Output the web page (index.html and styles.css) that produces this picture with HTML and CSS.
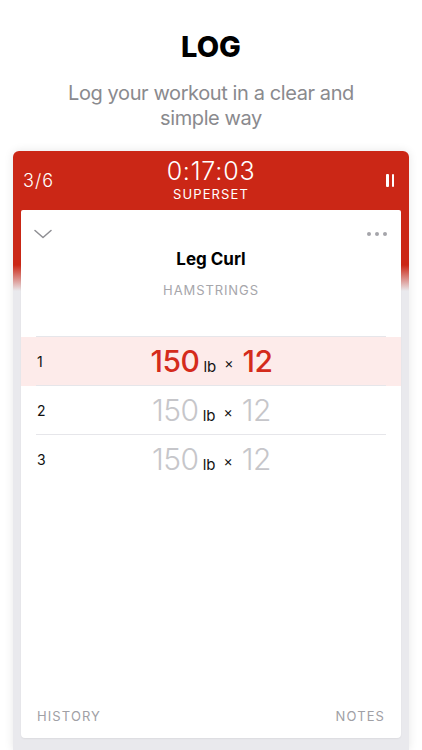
FILE: index.html
```html
<!DOCTYPE html>
<html lang="en">
<head>
    <meta charset="UTF-8">
    <meta name="viewport" content="width=device-width, initial-scale=1.0">
    <title>Log</title>
    <link rel="stylesheet" href="styles.css">
</head>
<body>
    <div class="intro">
        <h1>LOG</h1>
        <p>Log your workout in a clear and simple way</p>
    </div>

    <div class="phone">
        <div class="topbar">
            <span class="progress">3/6</span>
            <div class="timer">
                <span class="time">0:17:03</span>
                <span class="mode">SUPERSET</span>
            </div>
            <span class="pause"><i></i><i></i></span>
        </div>

        <div class="card">
            <div class="card-tools">
                <svg class="chevron" width="18" height="10" viewBox="0 0 18 10">
                    <path d="M1 1.5 L9 8.5 L17 1.5" fill="none" stroke="#8e8e93" stroke-width="1.5" stroke-linecap="round" stroke-linejoin="round"/>
                </svg>
                <span class="dots"><i></i><i></i><i></i></span>
            </div>
            <h2 class="exercise">Leg Curl</h2>
            <p class="muscle">HAMSTRINGS</p>

            <div class="sets">
                <div class="set active">
                    <div class="set-inner">
                        <span class="set-num">1</span>
                        <span class="set-value"><b>150</b><small>lb</small><em>×</em><b>12</b></span>
                    </div>
                </div>
                <div class="set">
                    <div class="set-inner">
                        <span class="set-num">2</span>
                        <span class="set-value"><b>150</b><small>lb</small><em>×</em><b>12</b></span>
                    </div>
                </div>
                <div class="set">
                    <div class="set-inner">
                        <span class="set-num">3</span>
                        <span class="set-value"><b>150</b><small>lb</small><em>×</em><b>12</b></span>
                    </div>
                </div>
            </div>

            <div class="card-footer">
                <span>HISTORY</span>
                <span>NOTES</span>
            </div>
        </div>
    </div>
</body>
</html>
```

FILE: styles.css
```css
body {
    font-family: Inter, "Liberation Sans", Arial, sans-serif;
    margin: 0;
    padding: 0;
    background-color: #fff;
    height: 100vh;
    display: flex;
    flex-direction: column;
    overflow: hidden;
}
.intro {
    text-align: center;
    padding-top: 30px;
}
.intro h1 {
    margin: 0;
    font-size: 29px;
    font-weight: 800;
    line-height: 34px;
    color: #000;
}
.intro p {
    margin: 17px auto 0;
    width: 300px;
    font-size: 20px;
    line-height: 25px;
    letter-spacing: -0.4px;
    color: #8a8a8e;
}
.phone {
    flex: 1;
    margin: 20px 13px 0;
    padding: 0 8px 12px;
    display: flex;
    flex-direction: column;
    border-radius: 6px 6px 0 0;
    background: linear-gradient(#cb2716 0, #cb2716 114px, #e9e9ed 140px);
    box-shadow: 0 0 10px rgba(0, 0, 0, 0.1);
}
.topbar {
    height: 59px;
    display: grid;
    grid-template-columns: 1fr auto 1fr;
    align-items: center;
    color: #fff;
    padding: 0 2px;
}
.progress {
    font-size: 18px;
    font-weight: 300;
    letter-spacing: 1px;
}
.timer {
    display: flex;
    flex-direction: column;
    align-items: center;
    margin-top: -2px;
}
.time {
    font-size: 25px;
    font-weight: 300;
    line-height: 28px;
    letter-spacing: 0.8px;
}
.mode {
    font-size: 13px;
    font-weight: 400;
    line-height: 18px;
    letter-spacing: 1.1px;
}
.pause {
    justify-self: end;
    display: flex;
    gap: 3px;
    margin-right: 5px;
}
.pause i {
    width: 2.5px;
    height: 13px;
    background: #fff;
    border-radius: 1px;
}
.card {
    flex: 1;
    background: #fff;
    border-radius: 2px 2px 4px 4px;
    display: flex;
    flex-direction: column;
    box-shadow: 0 1px 2px rgba(0, 0, 0, 0.06);
}
.card-tools {
    display: flex;
    justify-content: space-between;
    align-items: center;
    padding: 18px 14px 0 13px;
    height: 12px;
}
.dots {
    display: flex;
    gap: 4px;
}
.dots i {
    width: 4px;
    height: 4px;
    border-radius: 50%;
    background: #a5a5aa;
}
.exercise {
    margin: 8px 0 0;
    text-align: center;
    font-size: 17px;
    font-weight: 700;
    line-height: 22px;
    color: #000;
}
.muscle {
    margin: 12px 0 0;
    text-align: center;
    font-size: 13px;
    line-height: 16px;
    letter-spacing: 0.9px;
    color: #a6a6ab;
}
.sets {
    margin: 38px 15px 0;
    border-top: 1px solid #e6e6ea;
}
.set {
    margin: 0 -15px;
    padding: 0 15px;
}
.set.active {
    background: #fdebea;
}
.set-inner {
    height: 48px;
    display: grid;
    grid-template-columns: 1fr auto 1fr;
    align-items: center;
    border-bottom: 1px solid #e6e6ea;
    padding-left: 1px;
}
.set:last-child .set-inner {
    border-bottom: none;
}
.set-num {
    font-size: 14px;
    color: #111;
}
.set-value {
    display: flex;
    align-items: baseline;
    color: #c6c6ca;
}
.set-value b {
    font-size: 30px;
    font-weight: 300;
    letter-spacing: -0.5px;
}
.set-value small {
    font-size: 15px;
    color: #111;
    margin: 0 8px 0 4px;
}
.set-value em {
    font-style: normal;
    font-size: 14px;
    color: #111;
    margin-right: 9px;
    position: relative;
    top: -4px;
}
.set.active .set-value b {
    color: #d42b1c;
    font-weight: 500;
}
.card-footer {
    margin-top: auto;
    display: flex;
    justify-content: space-between;
    padding: 0 16px 14px;
    font-size: 13px;
    letter-spacing: 1.1px;
    color: #a0a0a5;
}
```
